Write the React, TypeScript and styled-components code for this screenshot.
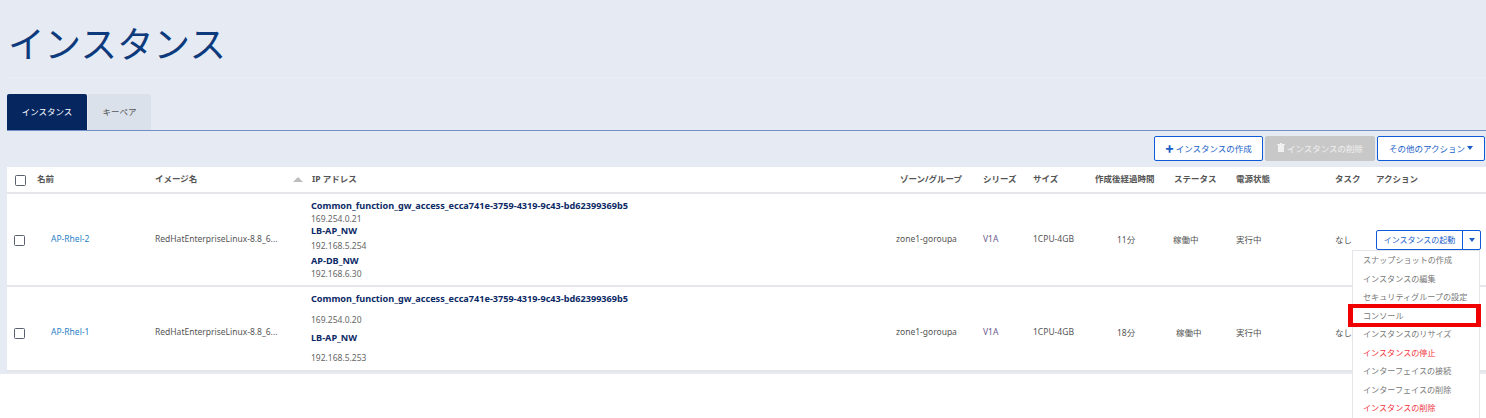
import React from 'react';
import styled, { createGlobalStyle } from 'styled-components';

const GlobalStyle = createGlobalStyle`
  html, body { margin: 0; padding: 0; background: #fff; }
  body { font-family: "Noto Sans", "Noto Sans CJK JP", sans-serif; font-size: 8.5px; color: #555; }
`;
const COLUMNS = '30px 118px 156px 589px 83px 50px 62px 79px 62px 99px 41px 1fr';

const Page = styled.div`
  width: 1486px;
  height: 418px;
  overflow: hidden;
  position: relative;
`;
const Backdrop = styled.div`
  background: #e6eaf3;
  height: 374px;
  padding-left: 7px;
  box-sizing: border-box;
`;
const Heading = styled.h1`
  margin: 0;
  height: 78px;
  border-bottom: 1px solid #ebeef5;
  padding: 18px 0 0 1px;
  box-sizing: border-box;
  font-family: "Noto Sans CJK JP", sans-serif;
  font-size: 36.6px;
  line-height: 50px;
  font-weight: 400;
  color: #0c3a7c;
`;
const TabBar = styled.div`
  display: flex;
  gap: 1px;
  margin-top: 16px;
  height: 37px;
  box-sizing: border-box;
  border-bottom: 1px solid #6f8fc6;
`;
const Tab = styled.div<{ $active?: boolean }>`
  display: flex;
  align-items: center;
  justify-content: center;
  padding-bottom: 2px;
  width: ${(p) => (p.$active ? '80px' : '63px')};
  border-radius: 2px 2px 0 0;
  background: ${(p) => (p.$active ? '#06265f' : '#dbe1eb')};
  color: ${(p) => (p.$active ? '#fff' : '#555')};
`;
const Toolbar = styled.div`
  display: flex;
  justify-content: flex-end;
  gap: 2px;
  height: 36px;
  padding: 5px 1px 0 0;
  box-sizing: border-box;
`;
const ToolButton = styled.div<{ $disabled?: boolean; $width: number }>`
  display: flex;
  align-items: center;
  justify-content: center;
  gap: 2px;
  height: 25px;
  padding-bottom: 2px;
  width: ${(p) => p.$width}px;
  box-sizing: border-box;
  border-radius: 2px;
  border: 1px solid ${(p) => (p.$disabled ? '#c8c8c8' : '#0d5bd6')};
  background: ${(p) => (p.$disabled ? '#c8c8c8' : '#fff')};
  color: ${(p) => (p.$disabled ? '#f1f1f1' : '#1a5fc8')};
`;
const Table = styled.div`
  background: #fff;
`;
const HeaderRow = styled.div`
  display: grid;
  grid-template-columns: ${COLUMNS};
  align-items: center;
  height: 27px;
  padding-bottom: 4px;
  border-bottom: 2px solid #e4e6ea;
  box-sizing: border-box;
  font-weight: 700;
  color: #555;
`;
const HeaderCell = styled.div<{ $sorted?: boolean }>`
  position: relative;
  white-space: nowrap;
  ${(p) => p.$sorted && `
    margin-left: 1px;
    &::before {
      content: '';
      position: absolute;
      left: -19px;
      top: 5px;
      border: 5px solid transparent;
      border-top: 0;
      border-bottom: 5px solid #bdbdbd;
    }
  `}
`;
const Row = styled.div<{ $height: number; $top: number; $bottom: number }>`
  display: grid;
  grid-template-columns: ${COLUMNS};
  align-items: center;
  height: ${(p) => p.$height}px;
  padding: ${(p) => p.$top}px 0 ${(p) => p.$bottom}px;
  border-bottom: 2px solid #e4e6ea;
  box-sizing: border-box;
`;
const Check = styled.div<{ $left: number; $top: number }>`
  width: 11px;
  height: 11px;
  margin: ${(p) => p.$top}px 0 0 ${(p) => p.$left}px;
  border: 1.5px solid #5a6070;
  border-radius: 1.5px;
  box-sizing: border-box;
  background: #fff;
`;
const NameLink = styled.div`
  padding-left: 14px;
  color: #2a7fc4;
`;
const Cell = styled.div<{ $shift?: number }>`
  margin-left: ${(p) => p.$shift ?? 0}px;
  white-space: nowrap;
`;
const Series = styled(Cell)`
  color: #6a5a8c;
`;
const Networks = styled.div<{ $lines: string; $top: number }>`
  align-self: start;
  display: grid;
  grid-template-rows: ${(p) => p.$lines};
  margin-top: ${(p) => p.$top}px;
  line-height: 12px;
`;
const NetName = styled.div`
  font-size: 9.15px;
  font-weight: 700;
  color: #0c2a66;
`;
const Address = styled.div`
  color: #666;
`;
const ActionGroup = styled.div`
  display: flex;
  height: 20px;
  width: 105px;
  margin-top: 2px;
  border: 1px solid #0d5bd6;
  border-radius: 2px;
  box-sizing: border-box;
  font-size: 8px;
  color: #1a5fc8;
`;
const ActionMain = styled.div`
  flex: 1;
  display: flex;
  align-items: center;
  justify-content: center;
  padding-bottom: 1px;
  border-right: 1px solid #0d5bd6;
`;
const ActionCaret = styled.div`
  width: 17px;
  display: flex;
  align-items: center;
  justify-content: center;
`;
const Caret = styled.span`
  display: inline-block;
  border: 3px solid transparent;
  border-bottom: 0;
  border-top: 4px solid currentColor;
`;
const Menu = styled.div`
  position: absolute;
  left: 1352px;
  top: 250px;
  width: 128px;
  height: 180px;
  background: #fff;
  border: 1px solid #e4e6ea;
  box-sizing: border-box;
`;
const MenuItem = styled.div<{ $danger?: boolean; $marked?: boolean }>`
  position: relative;
  height: 18.5px;
  line-height: 18.5px;
  padding-left: 10px;
  font-size: 8.1px;
  color: ${(p) => (p.$danger ? '#f0343c' : '#777')};
  ${(p) => p.$marked && `
    &::after {
      content: '';
      position: absolute;
      left: -5px;
      right: -2px;
      top: -3px;
      bottom: -2px;
      border-style: solid;
      border-color: #f00000;
      border-width: 4px 5px;
    }
  `}
`;

const headers = ['名前', 'イメージ名', 'IP アドレス', 'ゾーン/グループ', 'シリーズ', 'サイズ', '作成後経過時間', 'ステータス', '電源状態', 'タスク', 'アクション'];
const menuItems = [
  { label: 'スナップショットの作成' },
  { label: 'インスタンスの編集' },
  { label: 'セキュリティグループの設定' },
  { label: 'コンソール', marked: true },
  { label: 'インスタンスのリサイズ' },
  { label: 'インスタンスの停止', danger: true },
  { label: 'インターフェイスの接続' },
  { label: 'インターフェイスの削除' },
  { label: 'インスタンスの削除', danger: true },
];
const GW = 'Common_function_gw_access_ecca741e-3759-4319-9c43-bd62399369b5';
const rows = [
  {
    name: 'AP-Rhel-2', elapsed: '11分', statusShift: -1, height: 93, top: 0, bottom: 2,
    lines: '13px 12px 15px 15px 13px 12px', netTop: 6, hasAction: true,
    nets: [[GW, '169.254.0.21'], ['LB-AP_NW', '192.168.5.254'], ['AP-DB_NW', '192.168.6.30']],
  },
  {
    name: 'AP-Rhel-1', elapsed: '18分', statusShift: 2, height: 85, top: 6, bottom: 0,
    lines: '21px 18px 20px 12px', netTop: 0, hasAction: false,
    nets: [[GW, '169.254.0.20'], ['LB-AP_NW', '192.168.5.253']],
  },
];

export default function App() {
  return (
    <Page>
      <GlobalStyle />
      <Backdrop>
        <Heading>インスタンス</Heading>
        <TabBar>
          <Tab $active>インスタンス</Tab>
          <Tab>キーペア</Tab>
        </TabBar>
        <Toolbar>
          <ToolButton $width={109}><b>✚</b>インスタンスの作成</ToolButton>
          <ToolButton $width={110} $disabled>
            <svg width="8" height="9" viewBox="0 0 8 9"><path fill="#f1f1f1" d="M1 2h6v7H1zM0 1h8v1H0zM3 0h2v1H3z" /></svg>
            インスタンスの削除
          </ToolButton>
          <ToolButton $width={108}>その他のアクション<Caret /></ToolButton>
        </Toolbar>
        <Table>
          <HeaderRow>
            <Check $left={8} $top={5} />
            {headers.map((h) => (
              <HeaderCell key={h} $sorted={h === 'IP アドレス'}>{h}</HeaderCell>
            ))}
          </HeaderRow>
          {rows.map((r) => (
            <Row key={r.name} $height={r.height} $top={r.top} $bottom={r.bottom}>
              <Check $left={7} $top={3} />
              <NameLink>{r.name}</NameLink>
              <Cell>RedHatEnterpriseLinux-8.8_6...</Cell>
              <Networks $lines={r.lines} $top={r.netTop}>
                {r.nets.map(([net, ip]) => (
                  <React.Fragment key={ip}>
                    <NetName>{net}</NetName>
                    <Address>{ip}</Address>
                  </React.Fragment>
                ))}
              </Networks>
              <Cell $shift={-4}>zone1-goroupa</Cell>
              <Series>V1A</Series>
              <Cell>1CPU-4GB</Cell>
              <Cell $shift={22}>{r.elapsed}</Cell>
              <Cell $shift={r.statusShift}>稼働中</Cell>
              <Cell>実行中</Cell>
              <Cell>なし</Cell>
              {r.hasAction && (
                <ActionGroup>
                  <ActionMain>インスタンスの起動</ActionMain>
                  <ActionCaret><Caret /></ActionCaret>
                </ActionGroup>
              )}
            </Row>
          ))}
        </Table>
      </Backdrop>
      <Menu>
        {menuItems.map((m) => (
          <MenuItem key={m.label} $danger={m.danger} $marked={m.marked}>{m.label}</MenuItem>
        ))}
      </Menu>
    </Page>
  );
}
